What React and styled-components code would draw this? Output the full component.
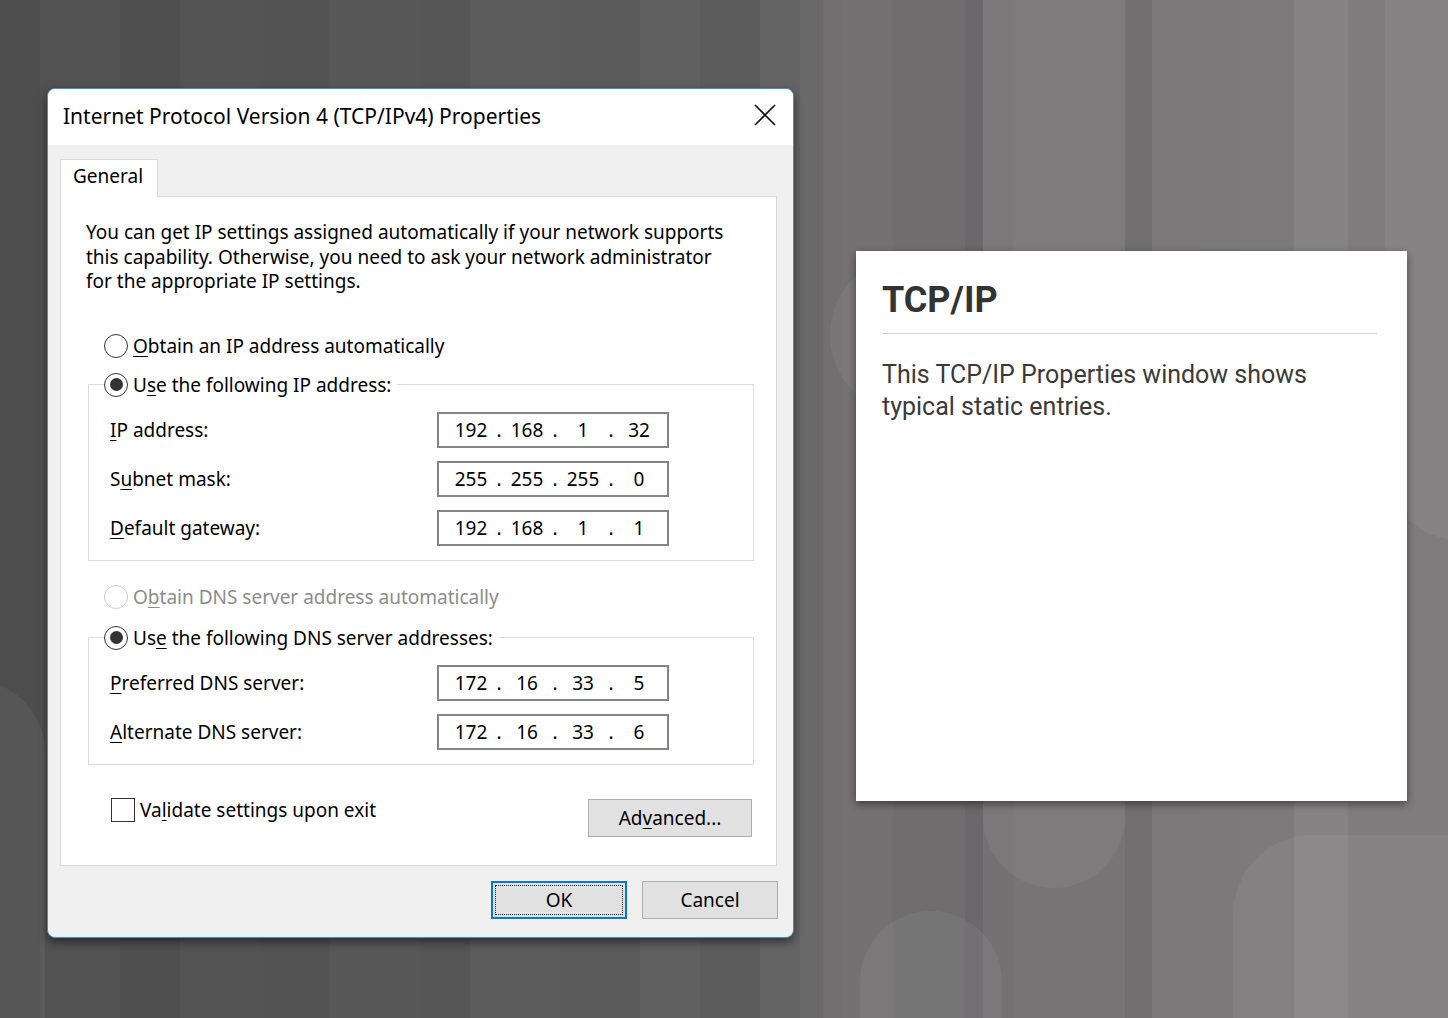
import React from 'react';
import styled, { createGlobalStyle } from 'styled-components';

const GlobalStyle = createGlobalStyle`
  html, body {
    margin: 0;
    padding: 0;
    background: #5f5e5e;
  }
  * {
    box-sizing: border-box;
  }
`;

const Page = styled.div`
  position: relative;
  width: 1448px;
  height: 1018px;
  overflow: hidden;
  background: #5f5e5e;
`;

const Backdrop = styled.svg`
  position: absolute;
  inset: 0;
  z-index: 0;
`;

const Stage = styled.div`
  position: relative;
  z-index: 1;
  display: flex;
  align-items: flex-start;
  gap: 62px;
  padding: 88px 0 0 47px;
`;

/* ---------- dialog ---------- */

const Window = styled.div`
  width: 747px;
  border: 1px solid #3f8fdc;
  border-radius: 8px;
  overflow: hidden;
  background: #f0f0f0;
  box-shadow: 0 4px 10px rgba(0, 0, 0, 0.5);
  font-family: "Noto Sans", "Open Sans", sans-serif;
  font-size: 19px;
  color: #000;
`;

const TitleBar = styled.div`
  height: 56px;
  display: flex;
  align-items: center;
  justify-content: space-between;
  padding: 0 17px 0 15px;
  background: #fff;
`;

const Caption = styled.div`
  font-size: 21px;
  color: #000;
  margin-top: -2px;
`;

const CloseIcon = styled.svg`
  width: 22px;
  height: 22px;
  margin-top: -4px;
`;

const Body = styled.div`
  padding: 14px 14px 18px 12px;
`;

const TabStrip = styled.div`
  display: flex;
`;

const Tab = styled.div`
  position: relative;
  z-index: 1;
  width: 98px;
  height: 38px;
  margin-bottom: -1px;
  padding: 3px 0 0 12px;
  background: #fff;
  border: 1px solid #d9d9d9;
  border-bottom: none;
  line-height: 26px;
`;

const Panel = styled.div`
  width: 717px;
  padding: 23px 0 28px;
  background: #fff;
  border: 1px solid #d9d9d9;
`;

const Intro = styled.p`
  margin: 0 0 0 25px;
  line-height: 24.5px;
`;

const RadioRow = styled.div`
  display: flex;
  align-items: center;
  gap: 5px;
  height: 26px;
  margin: ${(p) => p.$mt || 0}px 0 0 43px;
  color: ${(p) => (p.$disabled ? '#8c8c8c' : '#000')};
`;

const RadioDot = styled.span`
  position: relative;
  width: 24px;
  height: 24px;
  border-radius: 50%;
  background: #fff;
  border: 1.5px solid ${(p) => (p.$disabled ? '#cbcbcb' : '#333')};
  flex-shrink: 0;

  &::after {
    content: '';
    position: absolute;
    inset: 4.5px;
    border-radius: 50%;
    background: #333;
    display: ${(p) => (p.$checked ? 'block' : 'none')};
  }
`;

const Group = styled.fieldset`
  width: 666px;
  margin: ${(p) => p.$mt}px 0 0 27px;
  padding: 0;
  border: 1px solid #dcdcdc;
  min-width: 0;
`;

const Legend = styled.legend`
  margin-left: 15px;
  padding: 0 6px 0 0;
  background: #fff;
`;

const LegendRow = styled.div`
  display: flex;
  align-items: center;
  gap: 5px;
  height: 26px;
`;

const Fields = styled.div`
  display: grid;
  grid-template-columns: 327px 232px;
  row-gap: 13px;
  align-items: center;
  padding: 14px 0 14px 21px;
`;

const FieldLabel = styled.div`
  line-height: 26px;
`;

const IpBox = styled.div`
  display: flex;
  align-items: center;
  height: 36px;
  padding-left: 11px;
  border: 2px solid #858585;
  background: #fff;
`;

const Octet = styled.span`
  width: 42px;
  text-align: center;
`;

const Dot = styled.span`
  width: 14px;
  text-align: center;
`;

const Footer = styled.div`
  display: flex;
  align-items: flex-start;
  justify-content: space-between;
  margin: 32px 0 0 50px;
  width: 641px;
`;

const CheckRow = styled.div`
  display: flex;
  align-items: center;
  gap: 5px;
  height: 26px;
`;

const CheckBox = styled.span`
  width: 24px;
  height: 24px;
  border: 1.5px solid #333;
  background: #fff;
`;

const Button = styled.button`
  position: relative;
  width: ${(p) => p.$w || 136}px;
  height: 38px;
  margin-top: ${(p) => p.$mt || 0}px;
  background: #e1e1e1;
  border: ${(p) => (p.$primary ? '2px solid #0078d7' : '1px solid #adadad')};
  font-family: inherit;
  font-size: 19px;
  color: #000;
  padding: 0;

  &::after {
    content: '';
    position: absolute;
    inset: 2px;
    border: 1px dotted #222;
    display: ${(p) => (p.$primary ? 'block' : 'none')};
  }
`;

const ButtonRow = styled.div`
  display: flex;
  justify-content: flex-end;
  gap: 15px;
  margin-top: 15px;
  padding-right: 1px;
`;

const U = styled.u`
  text-underline-offset: 3px;
`;

/* ---------- info card ---------- */

const Card = styled.div`
  width: 551px;
  height: 550px;
  margin-top: 163px;
  padding: 28px 30px 0 26px;
  background: #fff;
  box-shadow: 0 3px 8px rgba(0, 0, 0, 0.45);
  font-family: Roboto, "Liberation Sans", sans-serif;
  color: #333;
`;

const CardTitle = styled.h2`
  margin: 0;
  font-size: 36px;
  line-height: 42px;
  font-weight: 700;
  color: #333;
`;

const Rule = styled.hr`
  margin: 12px 0 25px;
  border: none;
  border-top: 1px solid #cfcfcf;
`;

const CardText = styled.p`
  margin: 0;
  font-size: 25px;
  line-height: 32px;
  color: #3a3a3a;
`;

/* ---------- data ---------- */

const stripes = [
  [0, 40, '#4d4d4d'], [40, 80, '#525252'], [120, 60, '#4f4f4f'], [180, 80, '#555454'],
  [260, 70, '#535353'], [330, 90, '#595858'], [420, 50, '#565656'], [470, 90, '#5d5c5c'],
  [560, 80, '#5a5a5a'], [640, 60, '#616060'], [700, 60, '#5e5d5d'], [760, 40, '#656464'],
  [800, 23, '#6a696a'], [823, 19, '#716f70'], [842, 51, '#737172'], [893, 72, '#6f6d6e'],
  [965, 18, '#6a686a'], [983, 30, '#737172'], [1013, 112, '#767475'], [1125, 27, '#706e6f'],
  [1152, 48, '#7a7879'], [1200, 40, '#7b797a'], [1240, 54, '#7c7a7b'], [1294, 54, '#858384'],
  [1348, 100, '#7e7c7d'],
];

const pills = [
  [983, -200, 142, 1088, 71],
  [860, 911, 142, 400, 71],
  [1233, 835, 400, 500, 80],
  [830, 255, 160, 160, 80],
  [1385, -200, 200, 740, 75],
  [-100, 680, 145, 600, 72],
];

const ipGroup = [
  { key: 'ip', label: <><U>I</U>P address:</>, value: ['192', '168', '1', '32'] },
  { key: 'mask', label: <>S<U>u</U>bnet mask:</>, value: ['255', '255', '255', '0'] },
  { key: 'gw', label: <><U>D</U>efault gateway:</>, value: ['192', '168', '1', '1'] },
];

const dnsGroup = [
  { key: 'pref', label: <><U>P</U>referred DNS server:</>, value: ['172', '16', '33', '5'] },
  { key: 'alt', label: <><U>A</U>lternate DNS server:</>, value: ['172', '16', '33', '6'] },
];

function IpField({ value }) {
  return (
    <IpBox>
      {value.map((o, i) => (
        <React.Fragment key={i}>
          <Octet>{o}</Octet>
          {i < 3 && <Dot>.</Dot>}
        </React.Fragment>
      ))}
    </IpBox>
  );
}

function FieldGroup({ legend, rows, mt }) {
  return (
    <Group $mt={mt}>
      <Legend>
        <LegendRow>
          <RadioDot $checked />
          {legend}
        </LegendRow>
      </Legend>
      <Fields>
        {rows.map((r) => (
          <React.Fragment key={r.key}>
            <FieldLabel>{r.label}</FieldLabel>
            <IpField value={r.value} />
          </React.Fragment>
        ))}
      </Fields>
    </Group>
  );
}

function Background() {
  return (
    <Backdrop width="1448" height="1018" viewBox="0 0 1448 1018">
      {stripes.map(([x, w, c]) => (
        <rect key={x} x={x} y="0" width={w} height="1018" fill={c} />
      ))}
      {pills.map(([x, y, w, h, r], i) => (
        <rect key={i} x={x} y={y} width={w} height={h} rx={r} fill="rgba(255,255,255,0.055)" />
      ))}
    </Backdrop>
  );
}

export default function App() {
  return (
    <>
      <GlobalStyle />
      <Page>
        <Background />
        <Stage>
          <Window>
            <TitleBar>
              <Caption>Internet Protocol Version 4 (TCP/IPv4) Properties</Caption>
              <CloseIcon viewBox="0 0 22 22">
                <path d="M1 1 L21 21 M21 1 L1 21" stroke="#111" strokeWidth="1.6" fill="none" />
              </CloseIcon>
            </TitleBar>
            <Body>
              <TabStrip>
                <Tab>General</Tab>
              </TabStrip>
              <Panel>
                <Intro>
                  You can get IP settings assigned automatically if your network supports
                  <br />
                  this capability. Otherwise, you need to ask your network administrator
                  <br />
                  for the appropriate IP settings.
                </Intro>

                <RadioRow $mt={39}>
                  <RadioDot />
                  <span><U>O</U>btain an IP address automatically</span>
                </RadioRow>
                <FieldGroup
                  mt={13}
                  legend={<span>U<U>s</U>e the following IP address:</span>}
                  rows={ipGroup}
                />

                <RadioRow $mt={23} $disabled>
                  <RadioDot $disabled />
                  <span>O<U>b</U>tain DNS server address automatically</span>
                </RadioRow>
                <FieldGroup
                  mt={15}
                  legend={<span>Us<U>e</U> the following DNS server addresses:</span>}
                  rows={dnsGroup}
                />

                <Footer>
                  <CheckRow>
                    <CheckBox />
                    <span>Va<U>l</U>idate settings upon exit</span>
                  </CheckRow>
                  <Button $w={164} $mt={2}>Ad<U>v</U>anced...</Button>
                </Footer>
              </Panel>
              <ButtonRow>
                <Button $primary>OK</Button>
                <Button>Cancel</Button>
              </ButtonRow>
            </Body>
          </Window>

          <Card>
            <CardTitle>TCP/IP</CardTitle>
            <Rule />
            <CardText>This TCP/IP Properties window shows typical static entries.</CardText>
          </Card>
        </Stage>
      </Page>
    </>
  );
}
